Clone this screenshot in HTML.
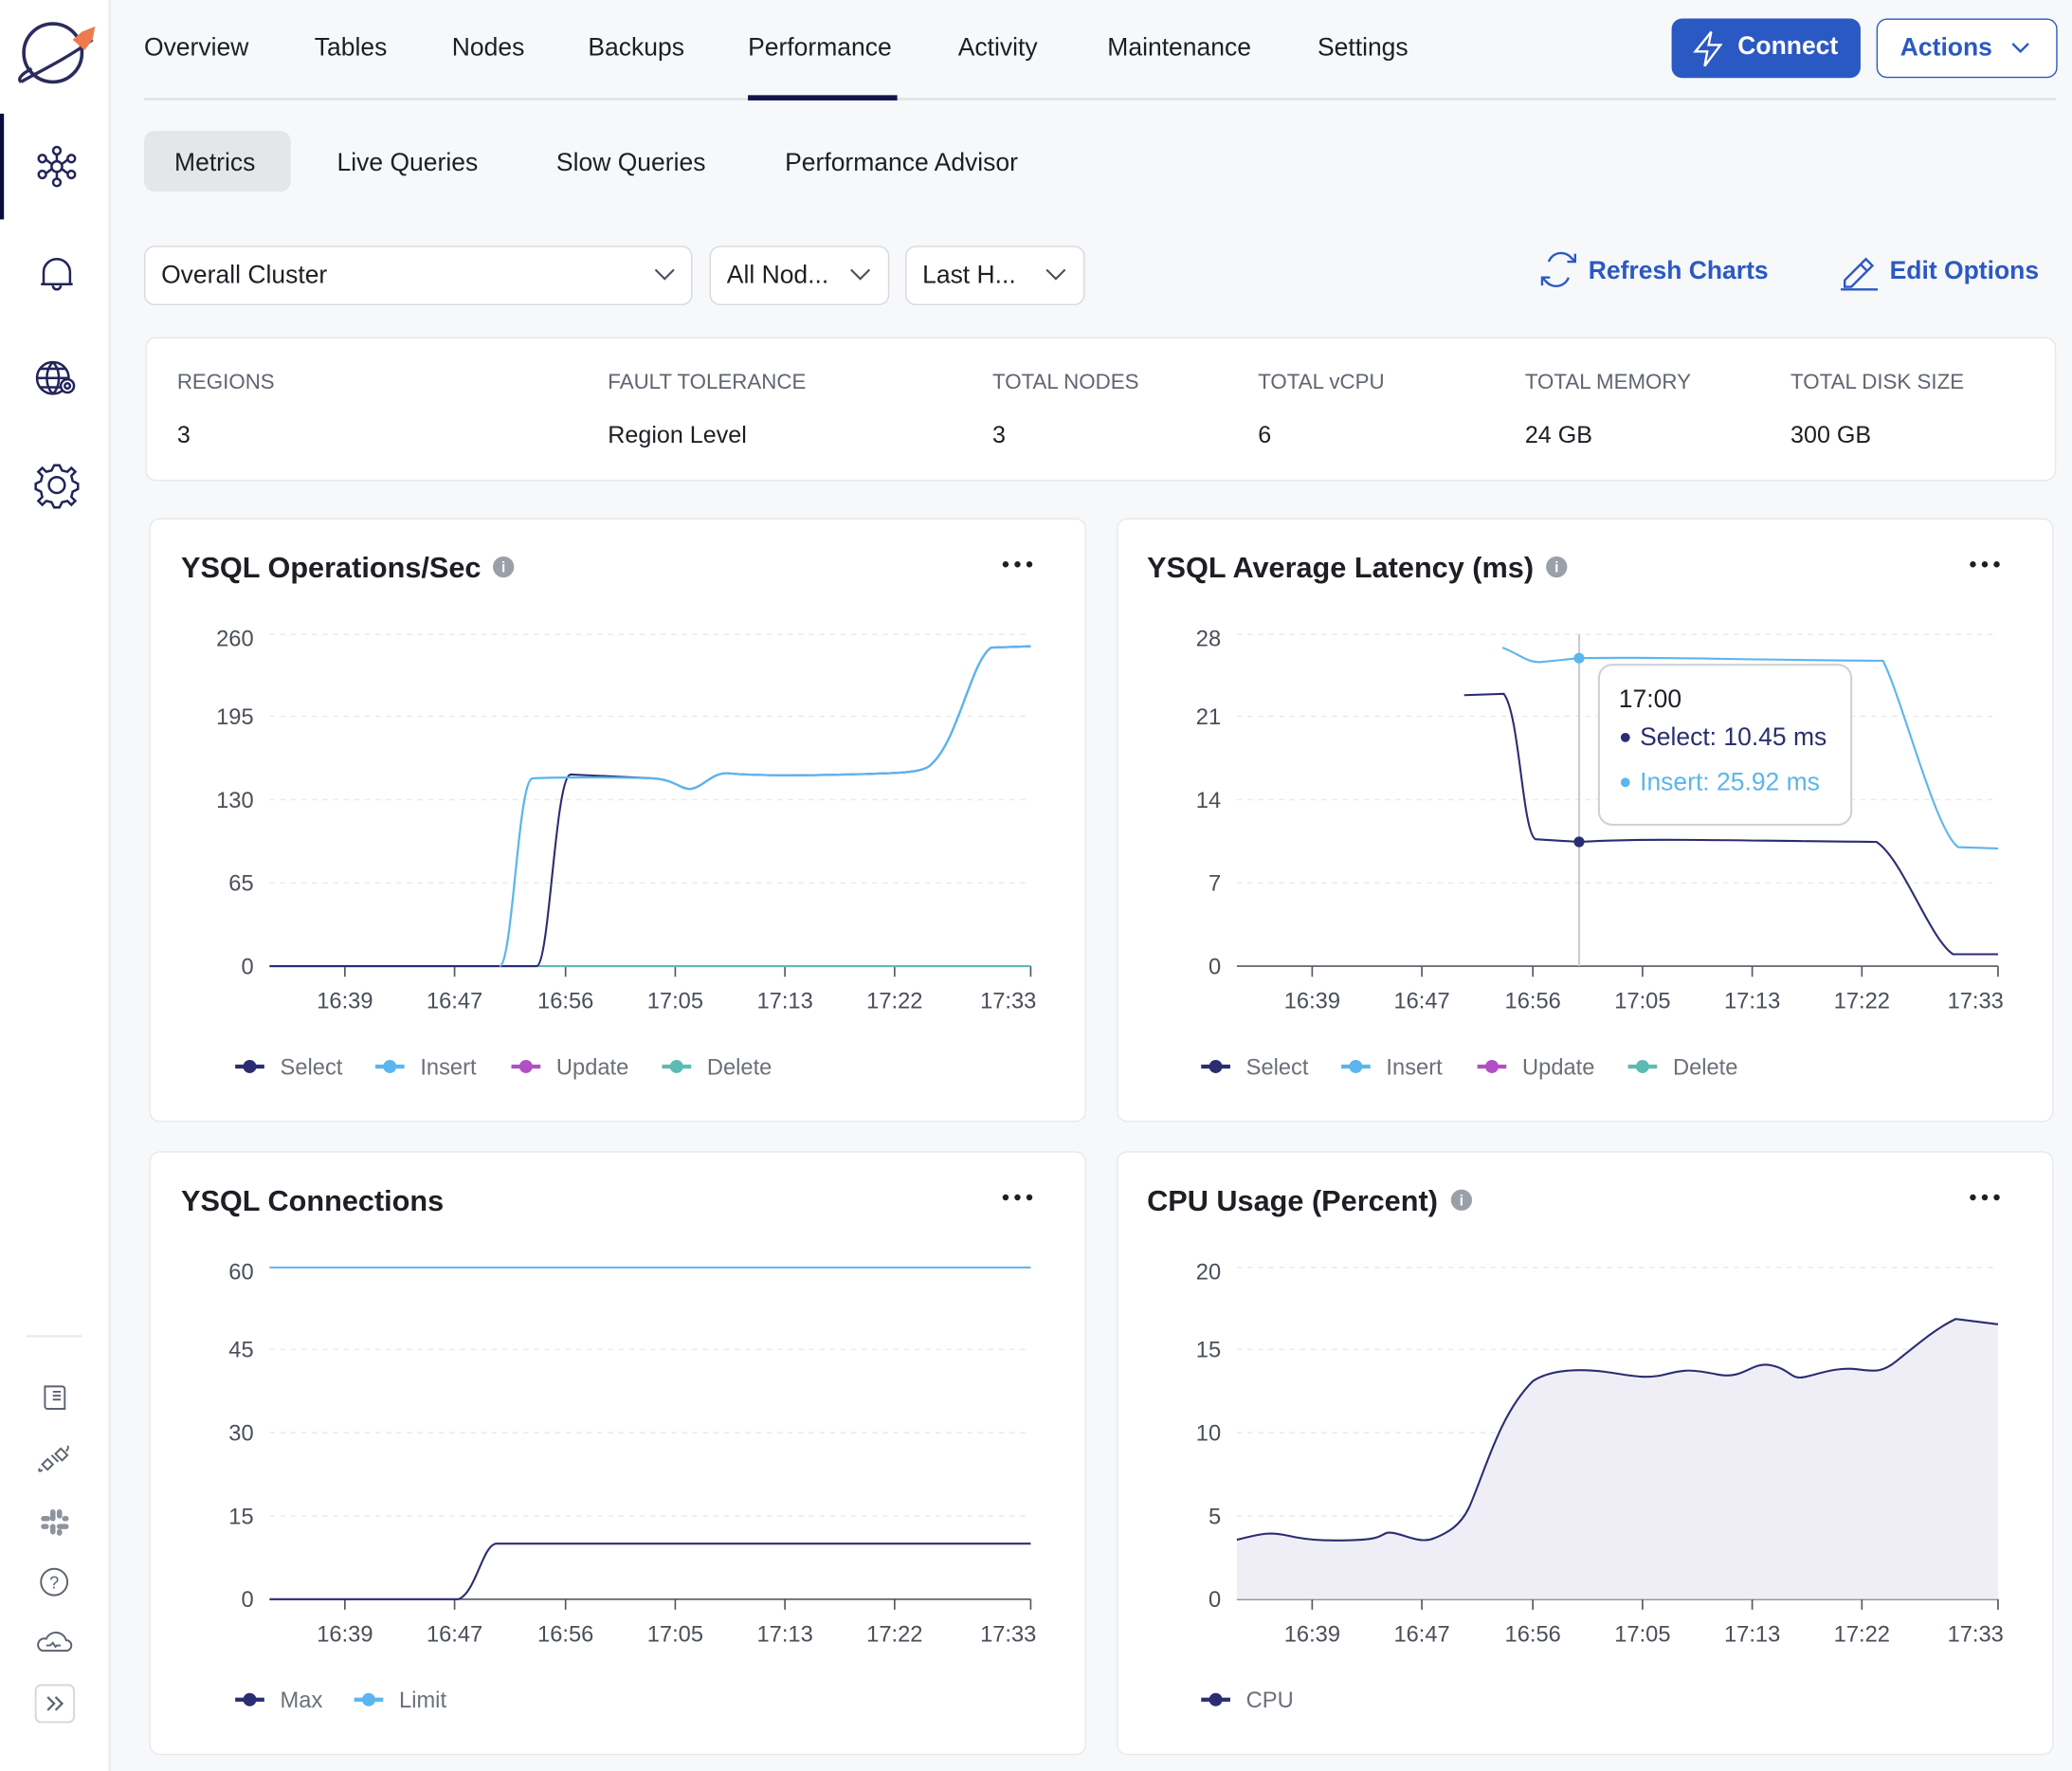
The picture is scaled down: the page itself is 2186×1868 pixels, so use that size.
<!DOCTYPE html>
<html><head><meta charset="utf-8">
<style>
*{box-sizing:border-box;margin:0;padding:0}
html,body{width:2186px;height:1868px;overflow:hidden;background:#f7f8fa}
#w{position:absolute;left:0;top:0;width:1568px;height:1340px;transform:scale(1.39413,1.39403);transform-origin:0 0;font-family:"Liberation Sans",sans-serif;color:#1e1f24;background:#f7f8fa}
.a{position:absolute}
.side{left:0;top:0;width:84px;height:1340px;background:#fff;border-right:2px solid #eceef2}
.tab{top:26px;font-size:19px;color:#1e1f24}
.card{background:#fff;border:1px solid #e6e8ec;border-radius:8px}
.dd{top:186px;height:45px;background:#fff;border:1px solid #d5d9df;border-radius:8px;font-size:19px;padding:11px 12px}
.lbl{font-size:16px;color:#5f6570;top:281px}
.val{font-size:18px;top:319px}
.ttl{font-size:22px;font-weight:bold}
</style></head><body><div id="w">
<div class="a side"></div>
<div class="a" style="left:0;top:86px;width:3px;height:80px;background:#0b0c3d"></div>
<svg class="a" style="left:0;top:0" width="84" height="1340" fill="none" stroke="#22245a" stroke-width="1.8">
<circle cx="40" cy="40" r="22" stroke-width="2.6" stroke="#2c2b5e"/>
<path d="M16 62 C 22 58 50 45 70 30" stroke-width="2.4" stroke="#2c2b5e"/>
<path d="M16 62 C 13 60 16 56 24 52" stroke-width="2.4" stroke="#2c2b5e"/>
<path d="M55 30 L62 24 L72 20 L70 30 L64 38 Z" fill="#ef7a4e" stroke="none"/>
<circle cx="43" cy="126" r="4"/><circle cx="43" cy="114" r="2.8"/><circle cx="43" cy="138" r="2.8"/><circle cx="32" cy="120" r="2.8"/><circle cx="54" cy="120" r="2.8"/><circle cx="32" cy="132" r="2.8"/><circle cx="54" cy="132" r="2.8"/>
<path d="M43 117v5M43 130v5M35 121l4 3M51 121l-4 3M35 131l4-3M51 131l-4-3"/>
<path d="M31 215 h24 M33 215 v-9 a10 10 0 0 1 20 0 v9 M40 216 a3 3 0 0 0 6 0"/>
<circle cx="40" cy="286" r="12"/><path d="M28 286h24M40 274c-6 6-6 18 0 24M40 274c6 6 6 18 0 24M30 279h20M30 293h20"/>
<circle cx="51" cy="292" r="5" fill="#fff"/><circle cx="51" cy="292" r="2"/>
<path d="M43 356l2-4h4l2 4 4 1 3-3 3 3-3 3 1 4 4 2v4l-4 2-1 4 3 3-3 3-3-3-4 1-2 4h-4l-2-4-4-1-3 3-3-3 3-3-1-4-4-2v-4l4-2 1-4-3-3 3-3 3 3z" transform="translate(-4 0)"/>
<circle cx="43" cy="367" r="6"/>
<path d="M20 1011h42" stroke="#e6e8ec" stroke-width="1.5"/>
<g stroke="#5b6370" stroke-width="1.4"><path d="M34 1049h13a2 2 0 0 1 2 2v15h-13a2 2 0 0 1-2-2zM34 1064a2 2 0 0 0 2 2M40 1053h6M40 1056h6M40 1059h6"/>
<path d="M46 1096l-4 4 5 5 4-4zM36 1104l-4 4 4 4 4-4zM44 1106l-5-5M32 1112c-2 2-3 1-2-1M50 1098c2-2 2-3 1-4"/>
<circle cx="41" cy="1197" r="10"/><text x="41" y="1202" font-size="13" fill="#5b6370" stroke="none" text-anchor="middle" font-family="Liberation Sans">?</text>
<path d="M32 1249h18a4 4 0 0 0 0-8 8 8 0 0 0-15-1 4 4 0 0 0-3 9zM35 1245h3l2-2 2 3 1-1h3"/>
<rect x="27" y="1275" width="29" height="28" rx="4" stroke="#d5d9df"/><path d="M36 1284l5 5-5 5M42 1284l5 5-5 5" stroke-width="1.6"/></g>
<g fill="#8d949e" stroke="none"><rect x="31" y="1147" width="7" height="4" rx="2"/><rect x="43" y="1153" width="9" height="4" rx="2"/><rect x="38" y="1142" width="4" height="9" rx="2"/><rect x="43" y="1142" width="4" height="7" rx="2"/><rect x="38" y="1153" width="4" height="8" rx="2"/><rect x="43" y="1157" width="4" height="5" rx="2"/><rect x="31" y="1153" width="6" height="4" rx="2"/><rect x="47" y="1147" width="5" height="4" rx="2"/></g>
</svg>

<div class="a tab" style="left:109px">Overview</div>
<div class="a tab" style="left:238px">Tables</div>
<div class="a tab" style="left:342px">Nodes</div>
<div class="a tab" style="left:445px">Backups</div>
<div class="a tab" style="left:566px">Performance</div>
<div class="a tab" style="left:725px">Activity</div>
<div class="a tab" style="left:838px">Maintenance</div>
<div class="a tab" style="left:997px">Settings</div>
<div class="a" style="left:109px;top:74px;width:1447px;height:2px;background:#e2e4e8"></div>
<div class="a" style="left:566px;top:72px;width:113px;height:4px;background:#14164a"></div>
<div class="a" style="left:1265px;top:14px;width:143px;height:45px;background:#2b59c3;border-radius:8px;color:#fff;font-size:19px;font-weight:bold;padding:11px 0 0 50px">Connect</div>
<svg class="a" style="left:1280px;top:22px" width="26" height="30" fill="none" stroke="#fff" stroke-width="1.7"><path d="M15 2L3 17h9l-2 11 12-16h-9z"/></svg>
<div class="a" style="left:1420px;top:14px;width:137px;height:45px;background:#fff;border:1.5px solid #2b59c3;border-radius:8px;color:#2b59c3;font-size:19px;font-weight:bold;padding:11px 0 0 17px">Actions</div>
<svg class="a" style="left:1521px;top:31px" width="16" height="10" fill="none" stroke="#2b59c3" stroke-width="1.7"><path d="M2 2l6 6 6-6"/></svg>

<div class="a" style="left:109px;top:99px;width:111px;height:46px;background:#e4e6ea;border-radius:8px"></div>
<div class="a" style="left:132px;top:113px;font-size:19px">Metrics</div>
<div class="a" style="left:255px;top:113px;font-size:19px">Live Queries</div>
<div class="a" style="left:421px;top:113px;font-size:19px">Slow Queries</div>
<div class="a" style="left:594px;top:113px;font-size:19px">Performance Advisor</div>

<div class="a dd" style="left:109px;width:415px">Overall Cluster</div>
<div class="a dd" style="left:537px;width:136px">All Nod...</div>
<div class="a dd" style="left:685px;width:136px">Last H...</div>
<svg class="a" style="left:0;top:0" width="1568" height="240" fill="none" stroke="#4a505a" stroke-width="1.5">
<path d="M496 204l7 7 7-7M644 204l7 7 7-7M792 204l7 7 7-7"/>
<g stroke="#2b59c3" stroke-width="1.7"><path d="M1172 198a10 10 0 0 1 17-3l3 3M1192 192v6h-6M1187 210a10 10 0 0 1-17 3l-3-3M1167 216v-6h6"/>
<path d="M1396 212l16-16 5 5-16 16h-5zM1408 200l5 5M1393 219h28"/></g>
</svg>
<div class="a" style="left:1202px;top:195px;font-size:19px;font-weight:bold;color:#2b59c3">Refresh Charts</div>
<div class="a" style="left:1430px;top:195px;font-size:19px;font-weight:bold;color:#2b59c3">Edit Options</div>

<div class="a card" style="left:110px;top:255px;width:1446px;height:109px"></div>
<div class="a lbl" style="left:134px">REGIONS</div><div class="a val" style="left:134px">3</div>
<div class="a lbl" style="left:460px">FAULT TOLERANCE</div><div class="a val" style="left:460px">Region Level</div>
<div class="a lbl" style="left:751px">TOTAL NODES</div><div class="a val" style="left:751px">3</div>
<div class="a lbl" style="left:952px">TOTAL vCPU</div><div class="a val" style="left:952px">6</div>
<div class="a lbl" style="left:1154px">TOTAL MEMORY</div><div class="a val" style="left:1154px">24 GB</div>
<div class="a lbl" style="left:1355px">TOTAL DISK SIZE</div><div class="a val" style="left:1355px">300 GB</div>

<div class="a card" style="left:113px;top:392px;width:709px;height:457px"></div>
<div class="a card" style="left:845px;top:392px;width:709px;height:457px"></div>
<div class="a card" style="left:113px;top:871px;width:709px;height:457px"></div>
<div class="a card" style="left:845px;top:871px;width:709px;height:457px"></div>
<div class="a ttl" style="left:137px;top:417px">YSQL Operations/Sec</div>
<div class="a ttl" style="left:868px;top:417px">YSQL Average Latency (ms)</div>
<div class="a ttl" style="left:137px;top:896px">YSQL Connections</div>
<div class="a ttl" style="left:868px;top:896px">CPU Usage (Percent)</div>

<svg class="a" style="left:0;top:0" width="1568" height="1340" font-family="Liberation Sans" font-size="17" fill="none">
<g fill="#9aa0a8"><circle cx="381" cy="429" r="8"/><circle cx="1178" cy="429" r="8"/><circle cx="1106" cy="908" r="8"/></g>
<g fill="#fff" font-size="11" font-weight="bold" text-anchor="middle"><text x="381" y="433">i</text><text x="1178" y="433">i</text><text x="1106" y="912">i</text></g>
<g fill="#1e1f24"><circle cx="761" cy="427" r="2.3"/><circle cx="770" cy="427" r="2.3"/><circle cx="779" cy="427" r="2.3"/><circle cx="1493" cy="427" r="2.3"/><circle cx="1502" cy="427" r="2.3"/><circle cx="1511" cy="427" r="2.3"/><circle cx="761" cy="906" r="2.3"/><circle cx="770" cy="906" r="2.3"/><circle cx="779" cy="906" r="2.3"/><circle cx="1493" cy="906" r="2.3"/><circle cx="1502" cy="906" r="2.3"/><circle cx="1511" cy="906" r="2.3"/></g>

<g stroke="#e8e9ec" stroke-dasharray="4 4">
<path d="M204 480H780M204 542H780M204 605H780M204 668H780M936 480H1512M936 542H1512M936 605H1512M936 668H1512M204 959H780M204 1021H780M204 1084H780M204 1147H780M936 959H1512M936 1021H1512M936 1084H1512M936 1147H1512"/></g>
<g stroke="#555a63" stroke-width="1.2">
<path d="M204 731H780M261 731v8M344 731v8M428 731v8M511 731v8M594 731v8M677 731v8M780 731v8"/>
<path d="M936 731H1512M993 731v8M1076 731v8M1160 731v8M1243 731v8M1326 731v8M1409 731v8M1512 731v8"/>
<path d="M204 1210H780M261 1210v8M344 1210v8M428 1210v8M511 1210v8M594 1210v8M677 1210v8M780 1210v8"/>
<path d="M936 1210H1512M993 1210v8M1076 1210v8M1160 1210v8M1243 1210v8M1326 1210v8M1409 1210v8M1512 1210v8"/></g>
<g fill="#4a4f58" text-anchor="end">
<text x="192" y="489">260</text><text x="192" y="548">195</text><text x="192" y="611">130</text><text x="192" y="674">65</text><text x="192" y="737">0</text>
<text x="924" y="489">28</text><text x="924" y="548">21</text><text x="924" y="611">14</text><text x="924" y="674">7</text><text x="924" y="737">0</text>
<text x="192" y="968">60</text><text x="192" y="1027">45</text><text x="192" y="1090">30</text><text x="192" y="1153">15</text><text x="192" y="1216">0</text>
<text x="924" y="968">20</text><text x="924" y="1027">15</text><text x="924" y="1090">10</text><text x="924" y="1153">5</text><text x="924" y="1216">0</text></g>
<g fill="#4a4f58" text-anchor="middle">
<g id="xl"><text x="261" y="763">16:39</text><text x="344" y="763">16:47</text><text x="428" y="763">16:56</text><text x="511" y="763">17:05</text><text x="594" y="763">17:13</text><text x="677" y="763">17:22</text><text x="763" y="763">17:33</text></g>
<use href="#xl" x="732"/><use href="#xl" y="479"/><use href="#xl" x="732" y="479"/></g>

<path d="M204 731H780" stroke="#5cbcb5" stroke-width="1.5"/>
<path d="M204 731H406C416 731 420 586 432 586C450 587 470 588 495 589C510 590 515 597 522 597C532 596 538 585 550 585C570 587 600 587 640 586C680 585 700 585 705 578C725 560 735 500 750 490L780 489" stroke="#2b2d72" stroke-width="1.5"/>
<path d="M378 731C388 731 392 589 403 589C420 588 470 588 495 589C510 590 515 597 522 597C532 596 538 585 550 585C570 587 600 587 640 586C680 585 700 585 705 578C725 560 735 500 750 490L780 489" stroke="#5bb5ef" stroke-width="1.6"/>
<path d="M1195 480V731" stroke="#c9ccd1" stroke-width="1.5"/>
<path d="M1108 526L1138 525C1150 540 1152 630 1162 635L1195 637C1250 634 1300 636 1420 637C1440 650 1460 710 1478 722L1512 722" stroke="#2b2d72" stroke-width="1.5"/>
<path d="M1137 490C1150 495 1155 501 1165 501L1195 498C1260 497 1300 499 1425 500C1440 530 1465 630 1482 641L1512 642" stroke="#5bb5ef" stroke-width="1.5"/>
<circle cx="1195" cy="498" r="4" fill="#5bb5ef"/><circle cx="1195" cy="637" r="4" fill="#2b2d72"/>
<rect x="1210" y="503" width="191" height="121" rx="10" fill="#fff" stroke="#cfd1d5" stroke-width="1.5"/>
<text x="1225" y="535" font-size="19" fill="#1e1f24">17:00</text>
<circle cx="1230" cy="558" r="3.5" fill="#2b2d72"/><text x="1241" y="564" font-size="19" fill="#2b2d72">Select: 10.45 ms</text>
<circle cx="1230" cy="592" r="3.5" fill="#5bb5ef"/><text x="1241" y="598" font-size="19" fill="#5bb5ef">Insert: 25.92 ms</text>
<path d="M204 959H780" stroke="#5bb5ef" stroke-width="1.5"/>
<path d="M204 1210H347C360 1205 365 1170 375 1168H780" stroke="#2b2d72" stroke-width="1.5"/>
<path d="M936 1165C950 1162 958 1158 975 1162S1010 1166 1030 1165S1045 1158 1055 1160S1075 1168 1085 1164S1105 1155 1112 1140C1125 1110 1135 1070 1160 1045C1175 1035 1200 1036 1215 1038S1245 1044 1260 1040S1280 1036 1300 1040S1325 1030 1340 1033S1355 1044 1365 1042S1390 1034 1405 1036S1425 1038 1435 1030C1450 1018 1465 1005 1480 998L1512 1002V1210H936Z" fill="#efeef6"/>
<path d="M936 1165C950 1162 958 1158 975 1162S1010 1166 1030 1165S1045 1158 1055 1160S1075 1168 1085 1164S1105 1155 1112 1140C1125 1110 1135 1070 1160 1045C1175 1035 1200 1036 1215 1038S1245 1044 1260 1040S1280 1036 1300 1040S1325 1030 1340 1033S1355 1044 1365 1042S1390 1034 1405 1036S1425 1038 1435 1030C1450 1018 1465 1005 1480 998L1512 1002" stroke="#2b2d72" stroke-width="1.5"/>

<g id="lg" fill="#6b7078">
<path d="M178 807h22" stroke="#2b2d72" stroke-width="3"/><circle cx="189" cy="807" r="5" fill="#2b2d72"/><text x="212" y="813">Select</text>
<path d="M284 807h22" stroke="#5bb5ef" stroke-width="3"/><circle cx="295" cy="807" r="5" fill="#5bb5ef"/><text x="318" y="813">Insert</text>
<path d="M387 807h22" stroke="#b34fc4" stroke-width="3"/><circle cx="398" cy="807" r="5" fill="#b34fc4"/><text x="421" y="813">Update</text>
<path d="M501 807h22" stroke="#5cbcb5" stroke-width="3"/><circle cx="512" cy="807" r="5" fill="#5cbcb5"/><text x="535" y="813">Delete</text></g>
<use href="#lg" x="731"/>
<g fill="#6b7078">
<path d="M178 1286h22" stroke="#2b2d72" stroke-width="3"/><circle cx="189" cy="1286" r="5" fill="#2b2d72"/><text x="212" y="1292">Max</text>
<path d="M268 1286h22" stroke="#5bb5ef" stroke-width="3"/><circle cx="279" cy="1286" r="5" fill="#5bb5ef"/><text x="302" y="1292">Limit</text>
<path d="M909 1286h22" stroke="#2b2d72" stroke-width="3"/><circle cx="920" cy="1286" r="5" fill="#2b2d72"/><text x="943" y="1292">CPU</text></g>
</svg>
</div></body></html>
